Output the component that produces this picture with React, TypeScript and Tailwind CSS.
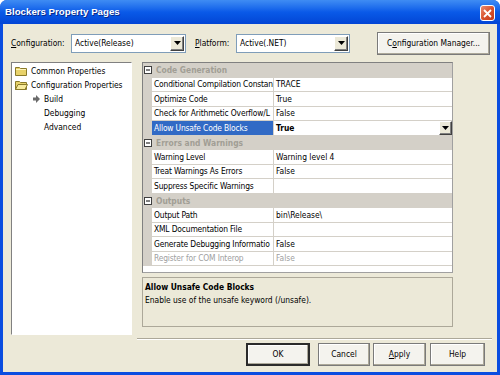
import React from "react";

type Row =
  | { cat: string }
  | { name: string; value: string; selected?: boolean; disabled?: boolean };

// names are cut where the column cuts them in the reference
const ROWS: Row[] = [
  { cat: "Code Generation" },
  { name: "Conditional Compilation Constan", value: "TRACE" },
  { name: "Optimize Code", value: "True" },
  { name: "Check for Arithmetic Overflow/L", value: "False" },
  { name: "Allow Unsafe Code Blocks", value: "True", selected: true },
  { cat: "Errors and Warnings" },
  { name: "Warning Level", value: "Warning level 4" },
  { name: "Treat Warnings As Errors", value: "False" },
  { name: "Suppress Specific Warnings", value: "" },
  { cat: "Outputs" },
  { name: "Output Path", value: "bin\\Release\\" },
  { name: "XML Documentation File", value: "" },
  { name: "Generate Debugging Informatio", value: "False" },
  { name: "Register for COM Interop", value: "False", disabled: true },
];

function DropArrow({ className = "" }: { className?: string }) {
  return (
    <div
      className={`flex items-center justify-center bg-[#ece9d8] border border-t-white border-l-white border-r-[#404040] border-b-[#404040] shadow-[inset_-1px_-1px_0_#808080] ${className}`}
    >
      <svg width="7" height="4" viewBox="0 0 7 4">
        <path d="M0 0h7L3.5 4z" fill="#000" />
      </svg>
    </div>
  );
}

function Combo({ text, width }: { text: string; width: string }) {
  return (
    <div className={`${width} h-[19px] bg-white border border-[#7f9db9] flex items-center`}>
      <span className="flex-1 pl-[3px] whitespace-nowrap overflow-hidden">{text}</span>
      <DropArrow className="w-[14px] h-[15px] mr-[1px]" />
    </div>
  );
}

function Folder({ open }: { open?: boolean }) {
  return (
    <svg width="13" height="10" viewBox="0 0 13 10" className="shrink-0">
      <path d="M0.5 1.5h4l1 1h6v7h-11z" fill="#e8d26a" stroke="#8a7a2a" />
      {open ? (
        <path d="M0.5 9.5l2.5-5h9.5l-2.5 5z" fill="#f7ea9c" stroke="#8a7a2a" />
      ) : (
        <path d="M1 3.5h10" stroke="#fff6c0" />
      )}
    </svg>
  );
}

function Btn({
  children,
  w,
  def,
}: {
  children: React.ReactNode;
  w: string;
  def?: boolean;
}) {
  return (
    <div
      className={`${w} h-[23px] flex items-center justify-center bg-[#f4f3ee] ${
        def ? "border-2 border-[#2b2b2b]" : "border border-[#7a7a7a]"
      } shadow-[inset_-1px_-1px_0_#aca899,inset_1px_1px_0_#ffffff]`}
    >
      {children}
    </div>
  );
}

function GridRow({ row }: { row: Row }) {
  if ("cat" in row) {
    return (
      <div className="h-[14.5px] flex items-center bg-[#d4d0c8]">
        <div className="w-[9px] flex justify-center">
          <svg width="8" height="8" viewBox="0 0 8 8">
            <rect x="0.5" y="0.5" width="7" height="7" fill="#fff" stroke="#404040" />
            <path d="M2 4h4" stroke="#000" />
          </svg>
        </div>
        <span className="pl-[4px] font-bold text-[#a19e95]">{row.cat}</span>
      </div>
    );
  }
  return (
    <div className="h-[14.5px] flex">
      <div className="w-[9px] bg-[#d4d0c8]" />
      <div
        className={`w-[122px] flex items-center overflow-hidden whitespace-nowrap pl-[2px] tracking-[-0.15px] border-b border-r border-[#d4d0c8] ${
          row.selected ? "bg-[#316ac5] text-white" : "bg-white"
        } ${row.disabled ? "text-[#a0a0a0]" : ""}`}
      >
        {row.name}
      </div>
      <div
        className={`flex-1 flex items-center bg-white border-b border-[#d4d0c8] pl-[2px] whitespace-nowrap ${
          row.selected ? "font-bold" : ""
        } ${row.disabled ? "text-[#a0a0a0]" : ""}`}
      >
        <span className="flex-1">{row.value}</span>
        {row.selected && <DropArrow className="w-[13px] h-full" />}
      </div>
    </div>
  );
}

export default function App() {
  return (
    <div className="w-[500px] h-[375px] bg-white font-['DejaVu_Sans_Condensed','Liberation_Sans',Arial,sans-serif] text-[8.4px] text-black leading-none">
      <div className="w-full h-full flex flex-col rounded-t-[7px] overflow-hidden bg-[#0a4de0]">
        {/* Title bar */}
        <div className="h-[24px] shrink-0 flex items-center justify-between pl-[5px] pr-[5px] bg-gradient-to-b from-[#3f8cf3] via-[#0a5ae8] to-[#0345d5]">
          <span className="text-white font-bold text-[9.7px] font-['Liberation_Sans',Arial,sans-serif] [text-shadow:1px_1px_0_#0a2a8a]">
            Blockers Property Pages
          </span>
          <div className="w-[15px] h-[16px] mt-[2px] rounded-[3px] border border-white bg-gradient-to-br from-[#e98a6f] via-[#d9532e] to-[#c3391c] flex items-center justify-center">
            <svg width="9" height="9" viewBox="0 0 9 9">
              <path d="M1 1l7 7M8 1L1 8" stroke="#fff" strokeWidth="1.8" />
            </svg>
          </div>
        </div>

        {/* Body */}
        <div className="flex-1 mx-[3px] mb-[3px] bg-[#ece9d8] flex flex-col pl-[8px] pt-[9px]">
          <div className="h-[20px] flex items-center">
            <span className="w-[60px]">
              <span className="underline">C</span>onfiguration:
            </span>
            <Combo text="Active(Release)" width="w-[115px]" />
            <span className="w-[41px] ml-[9px]">
              <span className="underline">P</span>latform:
            </span>
            <Combo text="Active(.NET)" width="w-[114px]" />
            <div className="ml-[27px]">
              <Btn w="w-[113px]">
                C<span className="underline">o</span>nfiguration Manager...
              </Btn>
            </div>
          </div>

          <div className="mt-[9px] flex">
            {/* Tree */}
            <div className="w-[121px] h-[273px] bg-white border border-t-[#808080] border-l-[#808080] border-r-white border-b-white pt-[1px]">
              <div className="h-[14px] flex items-center pl-[3px] gap-[3px]">
                <Folder />
                <span>Common Properties</span>
              </div>
              <div className="h-[14px] flex items-center pl-[3px] gap-[3px]">
                <Folder open />
                <span>Configuration Properties</span>
              </div>
              <div className="h-[14px] flex items-center pl-[21px] gap-[4px]">
                <svg width="7" height="8" viewBox="0 0 7 8">
                  <path d="M0 2.5h3V0l4 4-4 4V5.5H0z" fill="#6b6b6b" />
                </svg>
                <span>Build</span>
              </div>
              <div className="h-[14px] flex items-center pl-[32px]">Debugging</div>
              <div className="h-[14px] flex items-center pl-[32px]">Advanced</div>
            </div>

            {/* Right column */}
            <div className="ml-[10px] w-[311px] flex flex-col">
              <div className="h-[211px] bg-white border border-t-[#808080] border-l-[#808080] border-r-[#a0a0a0] border-b-[#a0a0a0] overflow-hidden">
                {ROWS.map((r, i) => (
                  <GridRow key={i} row={r} />
                ))}
              </div>
              <div className="mt-[4px] h-[50px] border border-[#aca899] pt-[5px] pl-[2px] flex flex-col gap-[5px]">
                <span className="font-bold">Allow Unsafe Code Blocks</span>
                <span>Enable use of the unsafe keyword (/unsafe).</span>
              </div>
            </div>
          </div>

          <div className="mt-[3px] ml-[126px] w-[355px] h-[2px] border-t border-[#aca899] border-b border-b-white" />

          <div className="mt-[3px] flex pl-[235px]">
            <Btn w="w-[64px]" def>
              OK
            </Btn>
            <div className="ml-[8px]">
              <Btn w="w-[52px]">Cancel</Btn>
            </div>
            <div className="ml-[3px]">
              <Btn w="w-[53px]">
                <span className="underline">A</span>pply
              </Btn>
            </div>
            <div className="ml-[4px]">
              <Btn w="w-[55px]">Help</Btn>
            </div>
          </div>
        </div>
      </div>
    </div>
  );
}
